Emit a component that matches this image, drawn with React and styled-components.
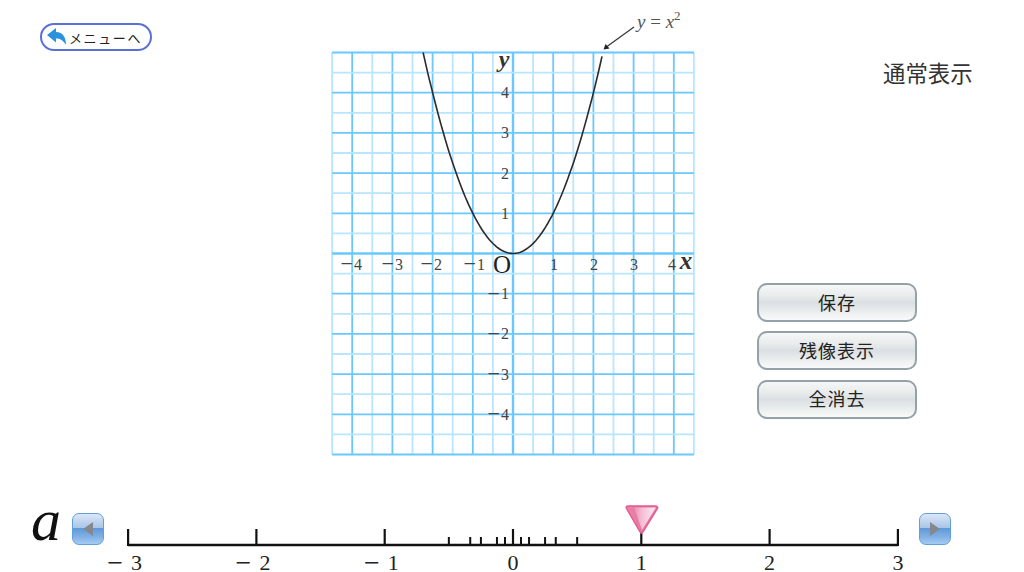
import React from 'react';
import styled, { createGlobalStyle } from 'styled-components';

const GlobalStyle = createGlobalStyle`
  html, body {
    margin: 0;
    padding: 0;
    background: #fff;
    overflow: hidden;
  }
`;

const jp = `"Noto Sans CJK JP", "Noto Sans", sans-serif`;
const math = `"Liberation Serif", "DejaVu Serif", serif`;

const Page = styled.div`
  width: 1024px;
  height: 572px;
  display: flex;
  flex-direction: column;
  overflow: hidden;
  font-family: ${jp};
`;

const Stage = styled.div`
  height: 490px;
  display: flex;
`;

const LeftColumn = styled.div`
  width: 325px;
  padding: 23px 0 0 40px;
  box-sizing: border-box;
`;

const MenuButton = styled.button`
  width: 112px;
  height: 28px;
  box-sizing: border-box;
  padding: 0 0 0 4px;
  display: flex;
  align-items: center;
  gap: 1px;
  background: #fff;
  border: 2px solid #5a70d6;
  border-radius: 14px;
  color: #222;
  font-family: ${jp};
  font-size: 13px;
  letter-spacing: 1.6px;
  white-space: nowrap;
`;

const ChartSvg = styled.svg`
  display: block;
  flex: none;
  width: 375px;
  height: 465px;
`;

const RightColumn = styled.div`
  flex: 1;
  display: flex;
  flex-direction: column;
  padding: 57px 0 0 57px;
`;

const ModeLabel = styled.div`
  margin-left: 126px;
  height: 30px;
  line-height: 30px;
  font-size: 22.4px;
  color: #333;
  white-space: nowrap;
`;

const ButtonStack = styled.div`
  margin-top: 196px;
  display: flex;
  flex-direction: column;
  gap: 9.3px;
`;

const ActionButton = styled.button`
  width: 160px;
  height: 39px;
  box-sizing: border-box;
  padding: 0 0 2px;
  border: 2px solid #95a1a9;
  border-radius: 10px;
  background: linear-gradient(#f6f7f7 0%, #e9ecec 30%, #dbdfe2 50%, #e7eaeb 70%, #f9fafa 100%);
  color: #222;
  font-family: ${jp};
  font-size: 18px;
  letter-spacing: 1px;
`;

const SliderRow = styled.div`
  height: 82px;
  display: flex;
  align-items: flex-start;
  padding-left: 31px;
`;

const ParamName = styled.div`
  width: 41px;
  height: 60px;
  line-height: 60px;
  font-family: ${math};
  font-style: italic;
  font-size: 60px;
  color: #111;
`;

const StepButton = styled.button`
  flex: none;
  width: 32px;
  height: 32px;
  margin-top: 23px;
  padding: 0;
  box-sizing: border-box;
  display: flex;
  align-items: center;
  justify-content: center;
  border: 1.5px solid #5f9fdc;
  border-radius: 7px;
  background: linear-gradient(#dbe7f7 0%, #a9c5e8 46%, #5e9ad9 48%, #7fb0e4 75%, #a4cbf2 100%);
`;

const ScaleSvg = styled.svg`
  display: block;
  flex: none;
  width: 815px;
  height: 82px;
`;

// グラフの座標 (ページ座標のまま描く)
const X0 = 513;
const Y0 = 253.5;
const UNIT = 40.2;
const px = (x) => X0 + x * UNIT;
const py = (y) => Y0 - y * UNIT;

const MAJOR = '#6ac8ff';
const MINOR = '#b8e5ff';

const halves = [];
for (let i = -10; i <= 10; i++) halves.push(i / 2);

const Signed = ({ value }) =>
  value < 0 ? (
    <>
      <tspan fontSize="22" dy="1.5">{'\u2212'}</tspan>
      <tspan dx="1" dy="-1.5">{-value}</tspan>
    </>
  ) : (
    value
  );

const Chart = () => {
  const curve = [];
  for (let x = -2.236; x <= 2.237; x += 0.05) {
    curve.push(`${px(x).toFixed(1)},${py(x * x).toFixed(1)}`);
  }
  const xLabels = [
    [-4, 358], [-3, 399], [-2, 438], [-1, 481], [1, 554], [2, 594], [3, 634], [4, 672],
  ];
  const yLabels = [4, 3, 2, 1, -1, -2, -3, -4];

  return (
    <ChartSvg viewBox="325 0 375 465">
      {halves.filter((v) => Math.abs(v) < 5).map((v) => (
        <line
          key={`v${v}`}
          x1={px(v)}
          x2={px(v)}
          y1={py(5)}
          y2={py(-5)}
          stroke={Number.isInteger(v) ? MAJOR : MINOR}
          strokeWidth={v === 0 ? 2.4 : 1.8}
        />
      ))}
      {halves.map((v) => (
        <line
          key={`h${v}`}
          x1={px(-4.5)}
          x2={px(4.5)}
          y1={py(v)}
          y2={py(v)}
          stroke={Number.isInteger(v) ? MAJOR : MINOR}
          strokeWidth={v === 0 ? 2.4 : 1.8}
        />
      ))}
      <polyline points={curve.join(' ')} fill="none" stroke="#2b2b2b" strokeWidth="1.6" />

      <g fontFamily={math} fontSize="16" fill="#444">
        {xLabels.map(([v, x]) => (
          <text key={v} x={x + 4} y="269.5" textAnchor="end">
            <Signed value={v} />
          </text>
        ))}
        {yLabels.map((v) => (
          <text key={v} x="509" y={py(v) + 5.5} textAnchor="end">
            <Signed value={v} />
          </text>
        ))}
      </g>
      <text x="502" y="273" fontFamily={math} fontSize="25" fill="#222" textAnchor="middle">O</text>
      <text x="686" y="269" fontFamily={math} fontSize="25" fontStyle="italic" fontWeight="bold" fill="#333" textAnchor="middle">x</text>
      <text x="504" y="67" fontFamily={math} fontSize="24" fontStyle="italic" fontWeight="bold" fill="#333" textAnchor="middle">y</text>

      <text x="637" y="28" fontFamily={math} fontSize="19" fill="#555">
        <tspan fontStyle="italic">y</tspan> = <tspan fontStyle="italic">x</tspan>
        <tspan dy="-8" fontSize="13">2</tspan>
      </text>
      <line x1="634" y1="27" x2="607" y2="46.5" stroke="#333" strokeWidth="1.2" />
      <path d="M603.5 49.5 L605.5 44 L609.5 48.5 Z" fill="#222" />
    </ChartSvg>
  );
};

const SX0 = 513;
const SUNIT = 128.3;
const sx = (v) => SX0 + v * SUNIT;
const minorTicks = [-1 / 2, -1 / 3, -1 / 4, -1 / 8, -1 / 16, 1 / 16, 1 / 8, 1 / 4, 1 / 3, 1 / 2];

const Scale = () => (
  <ScaleSvg viewBox="104 490 815 82">
    <defs>
      <linearGradient id="pointerBase" x1="0" y1="0" x2="1" y2="0">
        <stop offset="0" stopColor="#e983ab" />
        <stop offset="1" stopColor="#e0709b" />
      </linearGradient>
      <linearGradient id="pointerGloss" x1="0" y1="0" x2="1" y2="0">
        <stop offset="0" stopColor="#eb8fb3" />
        <stop offset="0.35" stopColor="#f5bcd2" />
        <stop offset="1" stopColor="#fdeef4" />
      </linearGradient>
    </defs>
    <line x1={sx(-3)} x2={sx(3)} y1="545" y2="545" stroke="#111" strokeWidth="2.6" />
    {[-3, -2, -1, 0, 1, 2, 3].map((v) => (
      <line key={v} x1={sx(v)} x2={sx(v)} y1="529" y2="546" stroke="#111" strokeWidth="2.2" />
    ))}
    {minorTicks.map((v) => (
      <line key={v} x1={sx(v)} x2={sx(v)} y1="537" y2="545" stroke="#111" strokeWidth="2" />
    ))}
    <g fontFamily={math} fontSize="22" fill="#222">
      {[-3, -2, -1, 0, 1, 2, 3].map((v) => (
        <text key={v} x={v < 0 ? sx(v) + 14 : sx(v)} y="570" textAnchor={v < 0 ? 'end' : 'middle'}>
          {v < 0 ? (
            <>
              <tspan fontSize="28" dy="2">{'\u2212'}</tspan>
              <tspan dx="8" dy="-2">{-v}</tspan>
            </>
          ) : (
            v
          )}
        </text>
      ))}
    </g>
    <path
      d="M628 506 H655 Q658.5 506 657.5 508.5 L643 532 Q641.5 534.5 640 532 L626.5 508.5 Q625.5 506 628 506 Z"
      fill="url(#pointerBase)"
      stroke="#e4598f"
      strokeWidth="1.4"
    />
    <path d="M634 507.5 H656 L642 530 Z" fill="url(#pointerGloss)" />
  </ScaleSvg>
);

const BackIcon = () => (
  <svg width="22" height="20" viewBox="0 0 22 20">
    <path
      d="M1 8 L10 1 V5 C16 5 20 9 20 18 C17 13 14 11.5 10 11.5 V15.5 Z"
      fill="#2a93dc"
    />
  </svg>
);

const Triangle = ({ dir }) => (
  <svg width="12" height="16" viewBox="0 0 12 16">
    <path d={dir === 'left' ? 'M11 1 V15 L1 8 Z' : 'M1 1 V15 L11 8 Z'} fill="#85898d" />
  </svg>
);

export default function App() {
  return (
    <Page>
      <GlobalStyle />
      <Stage>
        <LeftColumn>
          <MenuButton>
            <BackIcon />
            メニューへ
          </MenuButton>
        </LeftColumn>
        <Chart />
        <RightColumn>
          <ModeLabel>通常表示</ModeLabel>
          <ButtonStack>
            <ActionButton>保存</ActionButton>
            <ActionButton>残像表示</ActionButton>
            <ActionButton>全消去</ActionButton>
          </ButtonStack>
        </RightColumn>
      </Stage>
      <SliderRow>
        <ParamName>a</ParamName>
        <StepButton><Triangle dir="left" /></StepButton>
        <Scale />
        <StepButton><Triangle dir="right" /></StepButton>
      </SliderRow>
    </Page>
  );
}
